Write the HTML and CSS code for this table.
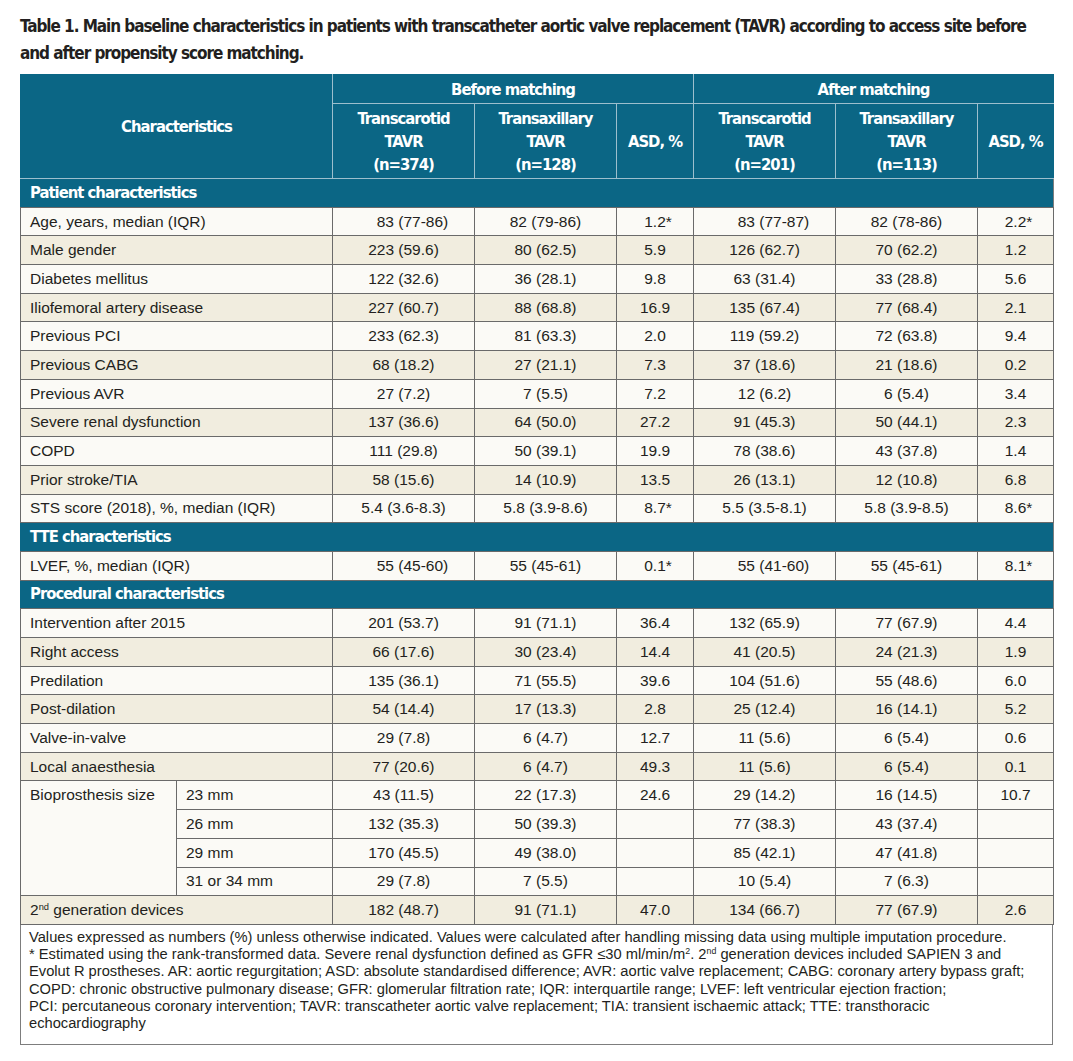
FILE: index.html
```html
<!DOCTYPE html>
<html>
<head>
<meta charset="utf-8">
<link rel="stylesheet" href="styles.css">
</head>
<body>
<div class="page">
  <h1 class="title">Table 1. Main baseline characteristics in patients with transcatheter aortic valve replacement (TAVR) according to access site before and after propensity score matching.</h1>
  <table class="tbl">
    <colgroup>
      <col class="c-a"><col class="c-b"><col class="c-n"><col class="c-n"><col class="c-s"><col class="c-n"><col class="c-n"><col class="c-s2">
    </colgroup>
    <thead>
      <tr class="h1">
        <th colspan="2" rowspan="2">Characteristics</th>
        <th colspan="3">Before matching</th>
        <th colspan="3">After matching</th>
      </tr>
      <tr class="h2">
        <th>Transcarotid<br>TAVR<br>(n=374)</th>
        <th>Transaxillary<br>TAVR<br>(n=128)</th>
        <th>ASD, %</th>
        <th>Transcarotid<br>TAVR<br>(n=201)</th>
        <th>Transaxillary<br>TAVR<br>(n=113)</th>
        <th>ASD, %</th>
      </tr>
    </thead>
    <tbody>
      <tr class="sec"><td colspan="8">Patient characteristics</td></tr>
      <tr class="w"><td colspan="2" class="lbl">Age, years, median (IQR)</td><td class="md">83 (77-86)</td><td>82 (79-86)</td><td>1.2<span class="st">*</span></td><td class="md">83 (77-87)</td><td>82 (78-86)</td><td>2.2<span class="st">*</span></td></tr>
      <tr class="b"><td colspan="2" class="lbl">Male gender</td><td>223 (59.6)</td><td>80 (62.5)</td><td>5.9</td><td>126 (62.7)</td><td>70 (62.2)</td><td>1.2</td></tr>
      <tr class="w"><td colspan="2" class="lbl">Diabetes mellitus</td><td>122 (32.6)</td><td>36 (28.1)</td><td>9.8</td><td>63 (31.4)</td><td>33 (28.8)</td><td>5.6</td></tr>
      <tr class="b"><td colspan="2" class="lbl">Iliofemoral artery disease</td><td>227 (60.7)</td><td>88 (68.8)</td><td>16.9</td><td>135 (67.4)</td><td>77 (68.4)</td><td>2.1</td></tr>
      <tr class="w"><td colspan="2" class="lbl">Previous PCI</td><td>233 (62.3)</td><td>81 (63.3)</td><td>2.0</td><td>119 (59.2)</td><td>72 (63.8)</td><td>9.4</td></tr>
      <tr class="b"><td colspan="2" class="lbl">Previous CABG</td><td>68 (18.2)</td><td>27 (21.1)</td><td>7.3</td><td>37 (18.6)</td><td>21 (18.6)</td><td>0.2</td></tr>
      <tr class="w"><td colspan="2" class="lbl">Previous AVR</td><td>27 (7.2)</td><td>7 (5.5)</td><td>7.2</td><td>12 (6.2)</td><td>6 (5.4)</td><td>3.4</td></tr>
      <tr class="b"><td colspan="2" class="lbl">Severe renal dysfunction</td><td>137 (36.6)</td><td>64 (50.0)</td><td>27.2</td><td>91 (45.3)</td><td>50 (44.1)</td><td>2.3</td></tr>
      <tr class="w"><td colspan="2" class="lbl">COPD</td><td>111 (29.8)</td><td>50 (39.1)</td><td>19.9</td><td>78 (38.6)</td><td>43 (37.8)</td><td>1.4</td></tr>
      <tr class="b"><td colspan="2" class="lbl">Prior stroke/TIA</td><td>58 (15.6)</td><td>14 (10.9)</td><td>13.5</td><td>26 (13.1)</td><td>12 (10.8)</td><td>6.8</td></tr>
      <tr class="w"><td colspan="2" class="lbl">STS score (2018), %, median (IQR)</td><td>5.4 (3.6-8.3)</td><td>5.8 (3.9-8.6)</td><td>8.7<span class="st">*</span></td><td>5.5 (3.5-8.1)</td><td>5.8 (3.9-8.5)</td><td>8.6<span class="st">*</span></td></tr>
      <tr class="sec"><td colspan="8">TTE characteristics</td></tr>
      <tr class="w"><td colspan="2" class="lbl">LVEF, %, median (IQR)</td><td class="md">55 (45-60)</td><td>55 (45-61)</td><td>0.1<span class="st">*</span></td><td class="md">55 (41-60)</td><td>55 (45-61)</td><td>8.1<span class="st">*</span></td></tr>
      <tr class="sec"><td colspan="8">Procedural characteristics</td></tr>
      <tr class="w"><td colspan="2" class="lbl">Intervention after 2015</td><td>201 (53.7)</td><td>91 (71.1)</td><td>36.4</td><td>132 (65.9)</td><td>77 (67.9)</td><td>4.4</td></tr>
      <tr class="b"><td colspan="2" class="lbl">Right access</td><td>66 (17.6)</td><td>30 (23.4)</td><td>14.4</td><td>41 (20.5)</td><td>24 (21.3)</td><td>1.9</td></tr>
      <tr class="w"><td colspan="2" class="lbl">Predilation</td><td>135 (36.1)</td><td>71 (55.5)</td><td>39.6</td><td>104 (51.6)</td><td>55 (48.6)</td><td>6.0</td></tr>
      <tr class="b"><td colspan="2" class="lbl">Post-dilation</td><td>54 (14.4)</td><td>17 (13.3)</td><td>2.8</td><td>25 (12.4)</td><td>16 (14.1)</td><td>5.2</td></tr>
      <tr class="w"><td colspan="2" class="lbl">Valve-in-valve</td><td>29 (7.8)</td><td>6 (4.7)</td><td>12.7</td><td>11 (5.6)</td><td>6 (5.4)</td><td>0.6</td></tr>
      <tr class="b"><td colspan="2" class="lbl">Local anaesthesia</td><td>77 (20.6)</td><td>6 (4.7)</td><td>49.3</td><td>11 (5.6)</td><td>6 (5.4)</td><td>0.1</td></tr>
      <tr class="w"><td rowspan="4" class="lbl top">Bioprosthesis size</td><td class="lbl">23 mm</td><td>43 (11.5)</td><td>22 (17.3)</td><td>24.6</td><td>29 (14.2)</td><td>16 (14.5)</td><td>10.7</td></tr>
      <tr class="w"><td class="lbl">26 mm</td><td>132 (35.3)</td><td>50 (39.3)</td><td></td><td>77 (38.3)</td><td>43 (37.4)</td><td></td></tr>
      <tr class="w"><td class="lbl">29 mm</td><td>170 (45.5)</td><td>49 (38.0)</td><td></td><td>85 (42.1)</td><td>47 (41.8)</td><td></td></tr>
      <tr class="w"><td class="lbl">31 or 34 mm</td><td>29 (7.8)</td><td>7 (5.5)</td><td></td><td>10 (5.4)</td><td>7 (6.3)</td><td></td></tr>
      <tr class="b"><td colspan="2" class="lbl">2<sup>nd</sup> generation devices</td><td>182 (48.7)</td><td>91 (71.1)</td><td>47.0</td><td>134 (66.7)</td><td>77 (67.9)</td><td>2.6</td></tr>
    </tbody>
  </table>
  <div class="notes">
    <span class="ln">Values expressed as numbers (%) unless otherwise indicated. Values were calculated after handling missing data using multiple imputation procedure.</span>
    <span class="ln">* Estimated using the rank-transformed data. Severe renal dysfunction defined as GFR ≤30 ml/min/m<sup>2</sup>. 2<sup>nd</sup> generation devices included SAPIEN 3 and</span>
    <span class="ln">Evolut R prostheses. AR: aortic regurgitation; ASD: absolute standardised difference; AVR: aortic valve replacement; CABG: coronary artery bypass graft;</span>
    <span class="ln">COPD: chronic obstructive pulmonary disease; GFR: glomerular filtration rate; IQR: interquartile range; LVEF: left ventricular ejection fraction;</span>
    <span class="ln">PCI: percutaneous coronary intervention; TAVR: transcatheter aortic valve replacement; TIA: transient ischaemic attack; TTE: transthoracic</span>
    <span class="ln">echocardiography</span>
  </div>
</div>
</body>
</html>
```

FILE: styles.css
```css
html, body {
  margin: 0;
  padding: 0;
  background: #ffffff;
}

.page {
  padding: 13px 0 0 20px;
  width: 1033px;
  color: #231f20;
  font-family: "Liberation Sans", Arial, sans-serif;
}

.title {
  margin: 0 0 7px 0;
  font-family: "Liberation Sans Narrow", "DejaVu Sans Condensed", "Liberation Sans", sans-serif;
  font-stretch: condensed;
  font-weight: bold;
  font-size: 17px;
  letter-spacing: -1.06px;
  line-height: 27px;
  color: #231f20;
  width: 1033px;
}

.tbl {
  width: 1033px;
  border-collapse: collapse;
  table-layout: fixed;
  font-size: 15.5px;
  border: 1px solid #7d7d7d;
}

.c-a { width: 156px; }
.c-b { width: 156px; }
.c-n { width: 142px; }
.c-s { width: 77px; }
.c-s2 { width: 76px; }

.tbl th {
  background: #0b6685;
  color: #ffffff;
  font-family: "Liberation Sans Narrow", "DejaVu Sans Condensed", "Liberation Sans", sans-serif;
  font-stretch: condensed;
  font-weight: bold;
  font-size: 16.5px;
  letter-spacing: -1px;
  line-height: 23px;
  text-align: center;
  vertical-align: middle;
  border: 1px solid #9dbfcd;
  padding: 0;
}

.tbl thead tr:first-child th {
  border-top-color: #0b6685;
}
.tbl thead th:first-child {
  border-left-color: #0b6685;
}
.tbl thead th:last-child {
  border-right-color: #0b6685;
}

.h1 th { height: 28px; }
.h2 th { height: 74px; }

.tbl td {
  border: 1px solid #6a6a6a;
  text-align: center;
  vertical-align: middle;
  padding: 0;
  height: 27.7px;
  line-height: 20px;
  white-space: nowrap;
}

.tbl td.lbl {
  text-align: left;
  padding-left: 9px;
}

.tbl td.top {
  vertical-align: top;
  padding-top: 4px;
}

.tbl td.md {
  padding-left: 18px;
}

.st {
  display: inline-block;
  width: 0;
  overflow: visible;
}

tr.w td { background: #fbfaf6; }
tr.b td { background: #f1eddf; }

tr.sec td {
  background: #0b6685;
  color: #ffffff;
  text-align: left;
  padding-left: 9px;
  font-family: "Liberation Sans Narrow", "DejaVu Sans Condensed", "Liberation Sans", sans-serif;
  font-stretch: condensed;
  font-weight: bold;
  font-size: 16.5px;
  letter-spacing: -1px;
  border-left-color: #0b6685;
  border-right-color: #7d7d7d;
}

sup {
  font-size: 0.6em;
  line-height: 0;
  vertical-align: 0.55em;
}

.notes {
  width: 1033px;
  box-sizing: border-box;
  border: 1px solid #7d7d7d;
  border-top: none;
  padding: 4px 0 11px 8px;
  font-size: 14.7px;
  line-height: 17.3px;
}

.ln {
  display: block;
  white-space: nowrap;
}
```
